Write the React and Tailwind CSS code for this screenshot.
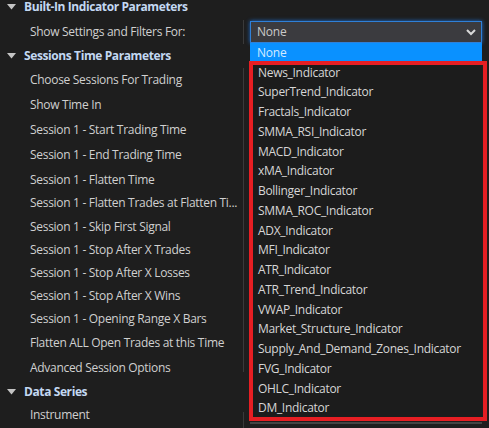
import React from "react";

const rows = [
  { t: "h", text: "Built-In Indicator Parameters", h: 25 },
  { t: "r", text: "Show Settings and Filters For:", h: 24, line: "full" },
  { t: "h", text: "Sessions Time Parameters", h: 24 },
  { t: "r", text: "Choose Sessions For Trading", h: 25, line: "full" },
  { t: "r", text: "Show Time In", h: 25, line: "full" },
  { t: "r", text: "Session 1 - Start Trading Time", h: 25, line: "full" },
  { t: "r", text: "Session 1 - End Trading Time", h: 25, line: "full" },
  { t: "r", text: "Session 1 - Flatten Time", h: 23, line: "full" },
  { t: "r", text: "Session 1 - Flatten Trades at Flatten Ti...", h: 24, line: "full" },
  { t: "r", text: "Session 1 - Skip First Signal", h: 23, line: "full" },
  { t: "r", text: "Session 1 - Stop After X Trades", h: 23, line: "full" },
  { t: "r", text: "Session 1 - Stop After X Losses", h: 23, line: "full" },
  { t: "r", text: "Session 1 - Stop After X Wins", h: 23, line: "full" },
  { t: "r", text: "Session 1 - Opening Range X Bars", h: 24, line: "full" },
  { t: "r", text: "Flatten ALL Open Trades at this Time", h: 25, line: "full" },
  { t: "r", text: "Advanced Session Options", h: 24, line: "top" },
  { t: "h", text: "Data Series", h: 23 },
  { t: "r", text: "Instrument", h: 25, line: "bottom" },
];

const items = [
  "News_Indicator",
  "SuperTrend_Indicator",
  "Fractals_Indicator",
  "SMMA_RSI_Indicator",
  "MACD_Indicator",
  "xMA_Indicator",
  "Bollinger_Indicator",
  "SMMA_ROC_Indicator",
  "ADX_Indicator",
  "MFI_Indicator",
  "ATR_Indicator",
  "ATR_Trend_Indicator",
  "VWAP_Indicator",
  "Market_Structure_Indicator",
  "Supply_And_Demand_Zones_Indicator",
  "FVG_Indicator",
  "OHLC_Indicator",
  "DM_Indicator",
];

const font = { fontFamily: "'Open Sans', 'Noto Sans', sans-serif" };

function Triangle() {
  return (
    <svg width="9" height="6" viewBox="0 0 9 6" className="mt-[9px] ml-[7px] shrink-0">
      <path d="M0 0 L9 0 L4.5 5.5 Z" fill="#c4c4c4" />
    </svg>
  );
}

function Row({ r }) {
  const style = { height: r.h };
  if (r.t === "h") {
    return (
      <div className="flex items-start" style={style}>
        <Triangle />
        <span className="ml-[8px] pt-[2px] leading-[20px] text-[12px] font-bold tracking-[-0.4px] text-[#c3d8f2] whitespace-nowrap">
          {r.text}
        </span>
      </div>
    );
  }
  let lineCls = "self-stretch";
  if (r.line === "top") lineCls = "self-start h-[16px]";
  if (r.line === "bottom") lineCls = "self-stretch mt-[9px]";
  return (
    <div className="flex items-start" style={style}>
      <div className="w-[243px] shrink-0 pl-[30px] pt-[2px] leading-[20px] text-[12px] tracking-[-0.3px] text-[#d0d0d0] whitespace-nowrap">
        {r.text}
      </div>
      <div className={"w-px bg-[#3a3a3a] " + lineCls} />
    </div>
  );
}

export default function App() {
  return (
    <div className="relative w-[489px] h-[428px] overflow-hidden bg-[#1e1e1e]" style={font}>
      <div className="flex flex-col -mt-[5px]">
        {rows.map((r, i) => (
          <Row key={i} r={r} />
        ))}
      </div>

      {/* combo box */}
      <div className="absolute left-[250px] top-[21px] w-[232px] h-[22px] flex items-center justify-between bg-[#3b3b3f] border border-[#2f80d8] shadow-[0_0_4px_#1f6fd0] pl-[6px] pr-[5px]">
        <span className="text-[12px] tracking-[-0.2px] text-[#cacaca] leading-[20px]">None</span>
        <svg width="10" height="7" viewBox="0 0 10 7">
          <path d="M1 1 L5 5 L9 1" fill="none" stroke="#d8d8d8" strokeWidth="2" />
        </svg>
      </div>

      {/* drop list */}
      <div className="absolute left-[250px] top-[43px] w-[232px] h-[381px] bg-[#1c1c1c] border-b-2 border-[#444444] flex flex-col">
        <div className="h-[19.5px] bg-[#0a91ff] pl-[7px] text-[12px] tracking-[-0.2px] leading-[19.5px] text-[#d4ebff]">None</div>
        {items.map((t) => (
          <div key={t} className="h-[19.75px] pl-[8px] text-[12px] tracking-[-0.3px] leading-[19.75px] text-[#d6d6d6] whitespace-nowrap">
            {t}
          </div>
        ))}
      </div>

      {/* red annotation box */}
      <div className="absolute left-[249px] top-[61px] w-[238px] h-[360px] border-4 border-[#e61e23]" />
    </div>
  );
}
